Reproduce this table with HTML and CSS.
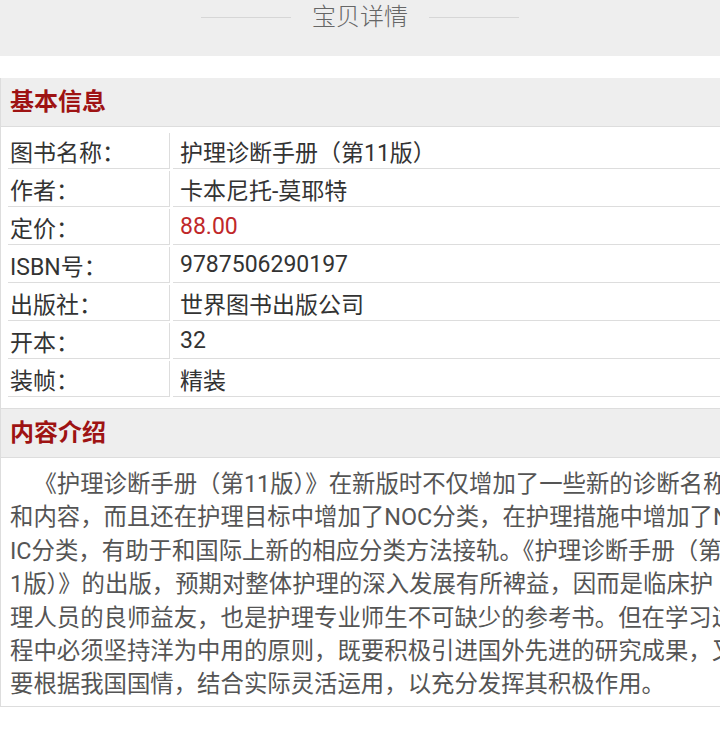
FILE: index.html
```html
<!DOCTYPE html>
<html lang="zh-CN">
<head>
  <meta charset="UTF-8">
  <meta name="viewport" content="width=device-width, initial-scale=1">
  <title>宝贝详情</title>
  <link rel="stylesheet" href="styles.css">
</head>
<body>
  <header class="page-title">
    <h1>宝贝详情</h1>
  </header>

  <div class="detail">
    <h2 class="detail-head">基本信息</h2>
    <table class="info-table">
      <tr><td class="label">图书名称：</td><td>护理诊断手册（第11版）</td></tr>
      <tr><td class="label">作者：</td><td>卡本尼托-莫耶特</td></tr>
      <tr><td class="label">定价：</td><td class="price">88.00</td></tr>
      <tr><td class="label">ISBN号：</td><td>9787506290197</td></tr>
      <tr><td class="label">出版社：</td><td>世界图书出版公司</td></tr>
      <tr><td class="label">开本：</td><td>32</td></tr>
      <tr><td class="label">装帧：</td><td>精装</td></tr>
    </table>

    <h2 class="detail-head boxed">内容介绍</h2>
    <p class="intro">《护理诊断手册（第11版）》在新版时不仅增加了一些新的诊断名称<br>和内容，而且还在护理目标中增加了NOC分类，在护理措施中增加了N<br>IC分类，有助于和国际上新的相应分类方法接轨。《护理诊断手册（第1<br>1版）》的出版，预期对整体护理的深入发展有所裨益，因而是临床护<br>理人员的良师益友，也是护理专业师生不可缺少的参考书。但在学习过<br>程中必须坚持洋为中用的原则，既要积极引进国外先进的研究成果，又<br>要根据我国国情，结合实际灵活运用，以充分发挥其积极作用。</p>
  </div>
</body>
</html>
```

FILE: styles.css
```css
* { margin: 0; padding: 0; box-sizing: border-box; }
html, body {
  overflow-x: hidden;
}
body {
  background: #fff;
  color: #333;
  font-family: Roboto, "Noto Sans CJK SC", sans-serif;
}
/* Top title bar */
.page-title {
  background: #eee;
  height: 56px;
  padding-top: 1px;
}
.page-title h1 {
  display: flex;
  align-items: center;
  justify-content: center;
  font-size: 24px;
  font-weight: 300;
  line-height: 32px;
  color: #666;
}
.page-title h1::before,
.page-title h1::after {
  content: "";
  width: 90px;
  height: 1px;
  background: #d6d6d6;
  margin: 0 21px;
}
/* Detail panel */
.detail {
  width: 760px;
  margin-top: 22px;
  border: 1px solid #ddd;
  border-top: none;
}
.detail-head {
  background: #eee;
  color: #9e1313;
  font-size: 24px;
  font-weight: 700;
  line-height: 48px;
  padding-left: 9px;
  border-bottom: 1px solid #ddd;
}
.detail-head.boxed {
  border-top: 1px solid #ddd;
  margin-top: 9px;
}
.info-table {
  border-collapse: separate;
  border-spacing: 3px 2px;
  margin: 4px 0 0 4px;
  width: 752px;
  font-size: 23px;
}
.info-table td {
  height: 36px;
  padding: 0 0 0 2px;
  border-bottom: 1px solid #ddd;
  vertical-align: middle;
}
.info-table td.label {
  width: 162px;
  border-right: 1px solid #ddd;
}
.info-table td + td {
  padding-left: 7px;
}
.info-table .price {
  color: #c0282a;
}
.intro {
  padding: 10px 4px 4px 9px;
  font-size: 23.4px;
  line-height: 33.4px;
  color: #555;
  text-indent: 1em;
  white-space: nowrap;
}
```
